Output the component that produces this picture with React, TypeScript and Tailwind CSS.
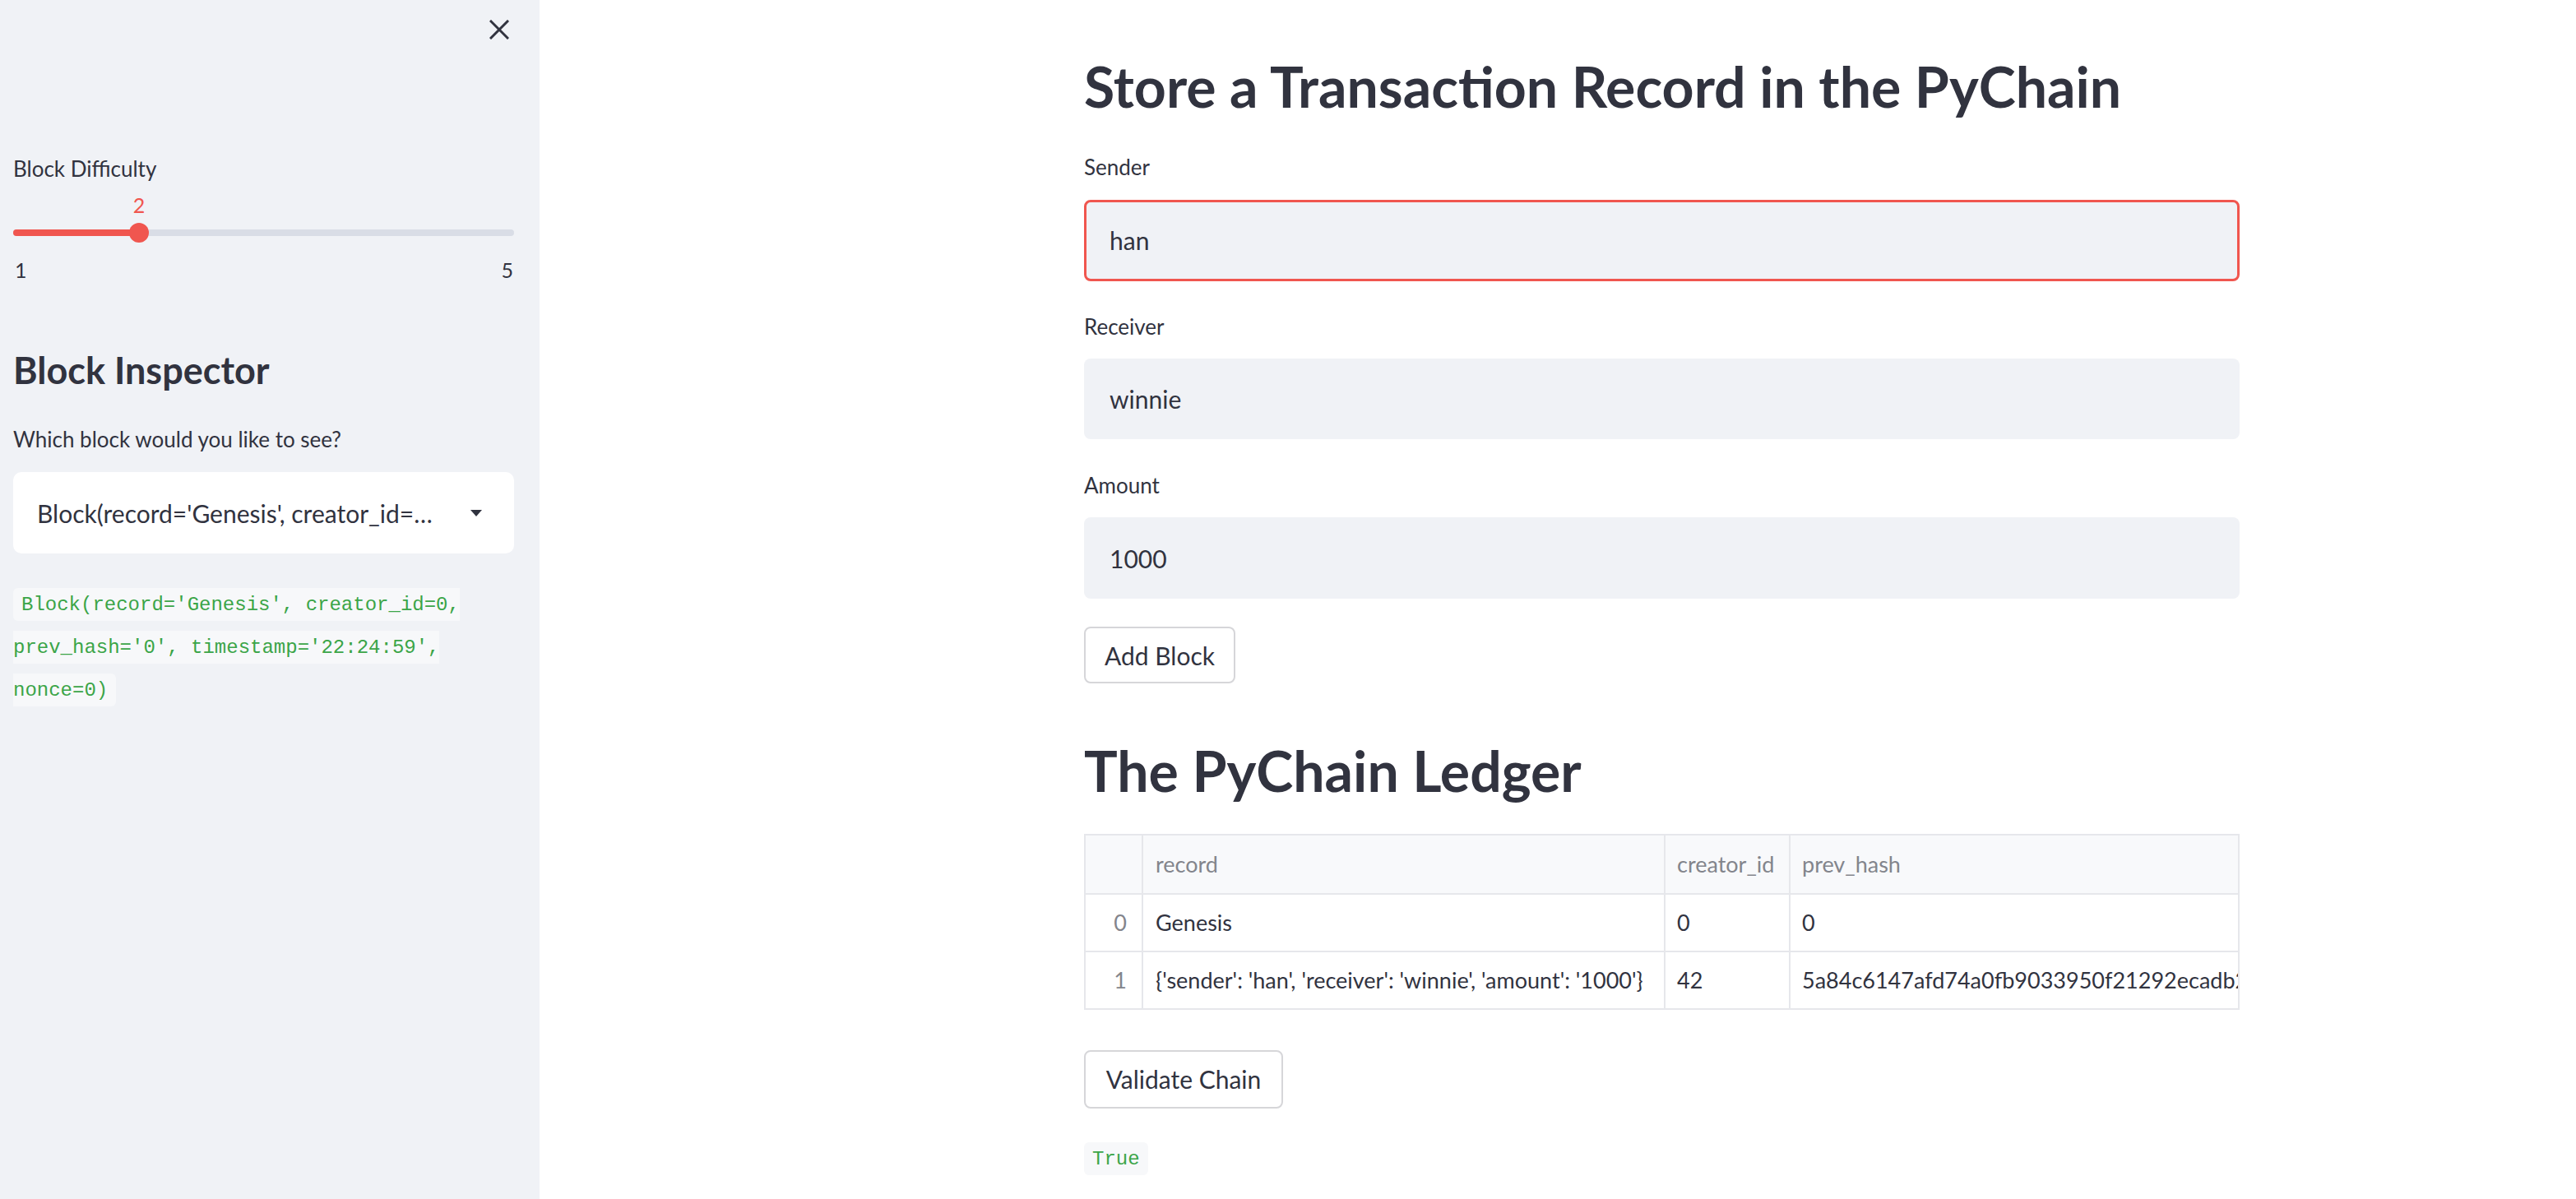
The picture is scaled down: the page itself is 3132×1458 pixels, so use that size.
import React from "react";

const sans = "font-['Lato','Noto_Sans',sans-serif]";
const mono = "font-['DejaVu_Sans_Mono','Liberation_Mono',monospace]";

function Label({ children, className = "" }: { children: React.ReactNode; className?: string }) {
  return <div className={`text-[26px] leading-[1.2] text-[#31333f] ${className}`}>{children}</div>;
}

function TextInput({ value, focused = false, className = "" }: { value: string; focused?: boolean; className?: string }) {
  return (
    <div
      className={`flex items-center rounded-[8px] bg-[#f0f2f6] pl-[28px] text-[30px] leading-[1.2] text-[#31333f] border-[3px] ${
        focused ? "border-[#f0564f]" : "border-transparent"
      } ${className}`}
    >
      {value}
    </div>
  );
}

function Button({ label, className = "" }: { label: string; className?: string }) {
  return (
    <div
      className={`flex items-center justify-center rounded-[8px] border-2 border-[#d6d6d9] bg-white text-[30px] leading-[1.2] text-[#31333f] ${className}`}
    >
      {label}
    </div>
  );
}

const blockText =
  "Block(record='Genesis', creator_id=0, prev_hash='0', timestamp='22:24:59', nonce=0)";

export default function App() {
  const hash =
    "5a84c6147afd74a0fb9033950f21292ecadb23c4e81f0b7d2a6c93e5f4d1b80a";
  return (
    <div className={`flex w-full min-h-[1458px] bg-white ${sans}`}>
      {/* Sidebar */}
      <aside className="w-[656px] shrink-0 bg-[#f0f2f6] pl-[16px] pr-[31px]">
        <div className="flex justify-end pt-[24px] pr-[6px]">
          <svg width="24" height="24" viewBox="0 0 24 24" fill="none" stroke="#31333f" strokeWidth="3" strokeLinecap="square">
            <path d="M2 2 L22 22" />
            <path d="M22 2 L2 22" />
          </svg>
        </div>

        <Label className="mt-[142px]">Block Difficulty</Label>

        <div className="relative mt-[13px] h-[110px]">
          <div className="absolute left-[153px] top-0 -translate-x-1/2 text-[25px] leading-[1.2] text-[#f0564f]">2</div>
          <div className="absolute left-0 right-0 top-[45px] h-[8px] rounded-full bg-[#d9dde6]">
            <div className="h-full w-[153px] rounded-full bg-[#f0564f]" />
          </div>
          <div className="absolute left-[141px] top-[37px] h-[24px] w-[24px] rounded-full bg-[#f0564f]" />
          <div className="absolute left-0 right-0 top-[79px] flex justify-between text-[25px] leading-[1.2] text-[#31333f]">
            <span className="pl-[2px]">1</span>
            <span className="pr-[1px]">5</span>
          </div>
        </div>

        <h2 className="mt-[79px] text-[45px] font-bold leading-[1.2] text-[#31333f]">Block Inspector</h2>

        <Label className="mt-[42px]">Which block would you like to see?</Label>

        <div className="mt-[24px] flex h-[99px] items-center rounded-[10px] bg-white pl-[29px] pr-[39px]">
          <div className="min-w-0 flex-1 whitespace-nowrap overflow-hidden text-[30px] leading-[1.2] text-[#31333f]">
            Block(record='Genesis', creator_id=…
          </div>
          <svg width="14" height="8" viewBox="0 0 14 8" className="shrink-0">
            <polygon points="0,0 14,0 7,8" fill="#31333f" />
          </svg>
        </div>

        <p className={`mt-[35px] text-[24px] leading-[51px] ${mono}`}>
          <code className="rounded-[6px] bg-[#f7f8fa] px-[10px] py-[6.5px] text-[#3ba548]">{blockText}</code>
        </p>
      </aside>

      {/* Main */}
      <main className="flex-1 pl-[662px]">
        <div className="w-[1405px]">
          <h1 className="mt-[64px] text-[68px] font-bold leading-[1.2] text-[#31333f]">
            Store a Transaction Record in the PyChain
          </h1>

          <Label className="mt-[42px]">Sender</Label>
          <TextInput value="han" focused className="mt-[24px] h-[99px]" />

          <Label className="mt-[40px]">Receiver</Label>
          <TextInput value="winnie" className="mt-[23px] h-[98px]" />

          <Label className="mt-[41px]">Amount</Label>
          <TextInput value="1000" className="mt-[23px] h-[99px]" />

          <Button label="Add Block" className="mt-[34px] h-[69px] w-[184px]" />

          <h1 className="mt-[65px] text-[68px] font-bold leading-[1.2] text-[#31333f]">The PyChain Ledger</h1>

          <div className="mt-[36px] overflow-hidden border-2 border-[#e6e7eb] text-[27px] leading-[1.2]">
            <div className="grid grid-cols-[70px_635px_152px_1fr] bg-[#f8f9fb] text-[#83858c] border-b-2 border-[#e6e7eb] h-[72px]">
              <div className="border-r-2 border-[#e6e7eb]" />
              <div className="flex items-center border-r-2 border-[#e6e7eb] pl-[15px]">record</div>
              <div className="flex items-center border-r-2 border-[#e6e7eb] pl-[14px]">creator_id</div>
              <div className="flex items-center pl-[14px]">prev_hash</div>
            </div>
            <div className="grid grid-cols-[70px_635px_152px_1fr] border-b-2 border-[#e6e7eb] h-[70px] text-[#31333f]">
              <div className="flex items-center justify-end border-r-2 border-[#e6e7eb] pr-[18px] text-[#83858c]">0</div>
              <div className="flex items-center border-r-2 border-[#e6e7eb] pl-[15px]">Genesis</div>
              <div className="flex items-center border-r-2 border-[#e6e7eb] pl-[14px]">0</div>
              <div className="flex items-center pl-[14px]">0</div>
            </div>
            <div className="grid grid-cols-[70px_635px_152px_1fr] h-[68px] text-[#31333f]">
              <div className="flex items-center justify-end border-r-2 border-[#e6e7eb] pr-[18px] text-[#83858c]">1</div>
              <div className="flex items-center whitespace-nowrap border-r-2 border-[#e6e7eb] pl-[15px]">
                {"{'sender': 'han', 'receiver': 'winnie', 'amount': '1000'}"}
              </div>
              <div className="flex items-center border-r-2 border-[#e6e7eb] pl-[14px]">42</div>
              <div className="flex min-w-0 items-center overflow-hidden whitespace-nowrap pl-[14px]">{hash}</div>
            </div>
          </div>

          <Button label="Validate Chain" className="mt-[49px] h-[71px] w-[242px]" />

          <p className={`mt-[35px] text-[24px] leading-[51px] ${mono}`}>
            <code className="rounded-[6px] bg-[#f7f8fa] px-[10px] py-[6.5px] text-[#3ba548]">True</code>
          </p>
        </div>
      </main>
    </div>
  );
}
